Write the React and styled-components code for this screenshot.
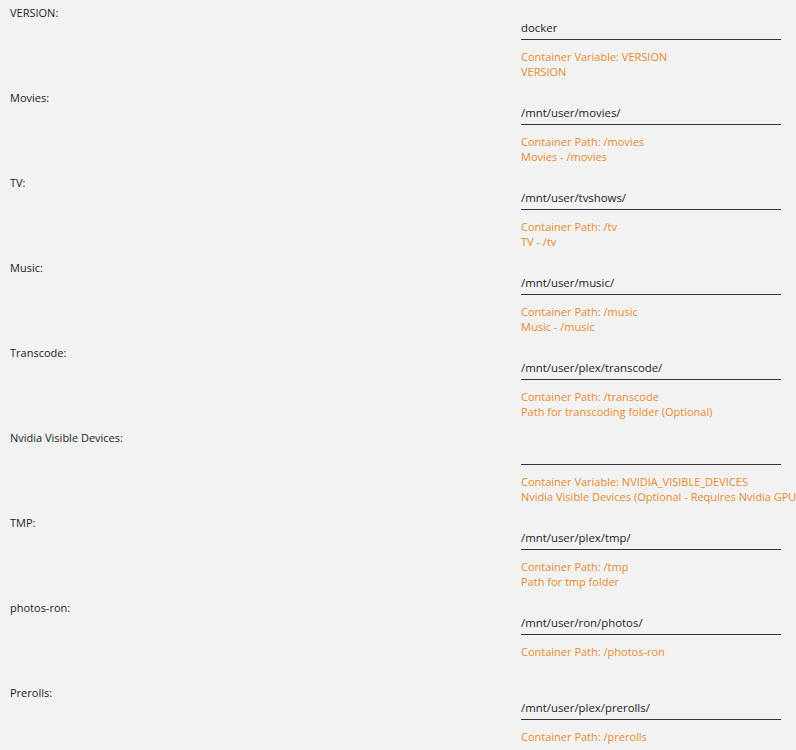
import React from "react";
import styled, { createGlobalStyle } from "styled-components";

const GlobalStyle = createGlobalStyle`
  html, body {
    margin: 0;
    padding: 0;
    background: #f2f2f2;
  }
  body {
    font-family: "Open Sans", "Noto Sans", sans-serif;
    color: #1c1c1c;
    overflow: hidden;
  }
`;

const Page = styled.div`
  width: 796px;
  padding: 6px 0 0 10px;
  box-sizing: border-box;
`;

const Row = styled.div`
  display: flex;
  flex-direction: column;
  height: 85px;
`;

const Label = styled.div`
  font-size: 11px;
  line-height: 14px;
  color: #1c1c1c;
`;

const Field = styled.div`
  margin-left: 511px;
  display: flex;
  flex-direction: column;
`;

const Input = styled.input`
  display: block;
  width: 260px;
  height: 14px;
  padding: 0 0 5px;
  margin: 0;
  border: none;
  border-bottom: 1px solid #333;
  background: transparent;
  font-family: "Open Sans", "Noto Sans", sans-serif;
  font-size: 11.4px;
  color: #1c1c1c;
  outline: none;
`;

const Desc = styled.div`
  margin-top: 9px;
  min-height: 30px;
  font-size: 11px;
  line-height: 15px;
  color: #e68a2e;
  white-space: nowrap;
`;

const fields = [
  { label: "VERSION:", value: "docker", desc: ["Container Variable: VERSION", "VERSION"] },
  { label: "Movies:", value: "/mnt/user/movies/", desc: ["Container Path: /movies", "Movies - /movies"] },
  { label: "TV:", value: "/mnt/user/tvshows/", desc: ["Container Path: /tv", "TV - /tv"] },
  { label: "Music:", value: "/mnt/user/music/", desc: ["Container Path: /music", "Music - /music"] },
  {
    label: "Transcode:",
    value: "/mnt/user/plex/transcode/",
    desc: ["Container Path: /transcode", "Path for transcoding folder (Optional)"],
  },
  {
    label: "Nvidia Visible Devices:",
    value: "",
    desc: [
      "Container Variable: NVIDIA_VISIBLE_DEVICES",
      "Nvidia Visible Devices (Optional - Requires Nvidia GPU)",
    ],
  },
  { label: "TMP:", value: "/mnt/user/plex/tmp/", desc: ["Container Path: /tmp", "Path for tmp folder"] },
  { label: "photos-ron:", value: "/mnt/user/ron/photos/", desc: ["Container Path: /photos-ron"] },
  { label: "Prerolls:", value: "/mnt/user/plex/prerolls/", desc: ["Container Path: /prerolls"] },
];

const ConfigRow = ({ label, value, desc }) => (
  <Row>
    <Label>{label}</Label>
    <Field>
      <Input type="text" defaultValue={value} />
      <Desc>
        {desc.map((line) => (
          <div key={line}>{line}</div>
        ))}
      </Desc>
    </Field>
  </Row>
);

export default function App() {
  return (
    <>
      <GlobalStyle />
      <Page>
        {fields.map((f) => (
          <ConfigRow key={f.label} {...f} />
        ))}
      </Page>
    </>
  );
}
